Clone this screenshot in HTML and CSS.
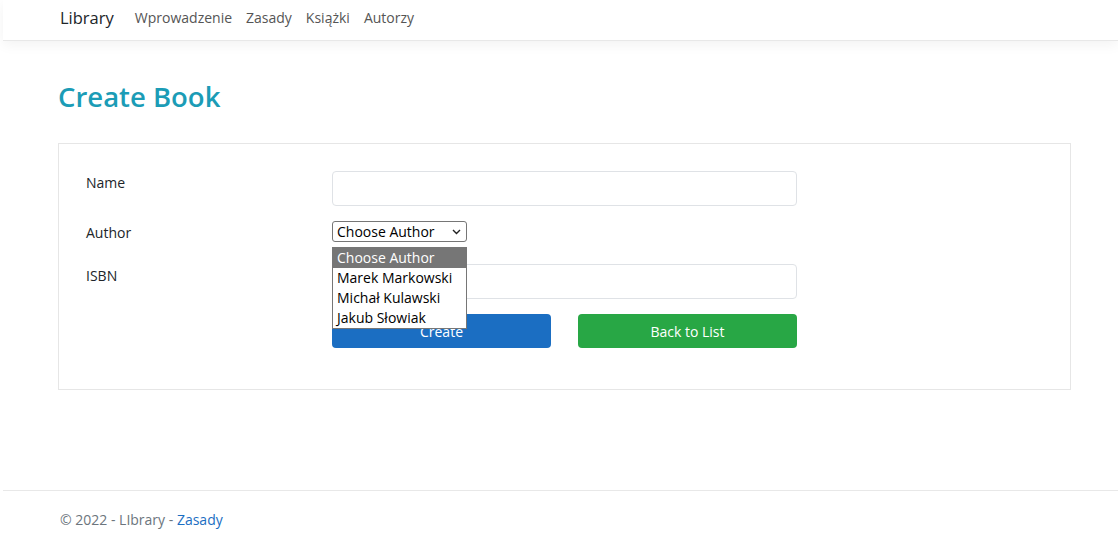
FILE: index.html
```html
<!DOCTYPE html>
<html lang="pl">
<head>
<meta charset="utf-8">
<title>Create Book - Library</title>
<link rel="stylesheet" href="styles.css">
</head>
<body>
<header class="topbar">
  <nav class="nav">
    <span class="brand">Library</span>
    <a class="nav-link">Wprowadzenie</a>
    <a class="nav-link">Zasady</a>
    <a class="nav-link">Książki</a>
    <a class="nav-link">Autorzy</a>
  </nav>
</header>
<main class="main">
  <h1 class="title">Create Book</h1>
  <section class="card">
    <form class="form">
      <label class="label">Name</label>
      <div class="field"><div class="input"></div></div>
      <label class="label">Author</label>
      <div class="field select-field">
        <div class="select"><span>Choose Author</span>
          <svg class="chev" width="9" height="6" viewBox="0 0 9 6"><path d="M1 1 L4.5 4.5 L8 1" fill="none" stroke="#222" stroke-width="1.4"/></svg>
        </div>
        <ul class="popup">
          <li class="opt active">Choose Author</li>
          <li class="opt">Marek Markowski</li>
          <li class="opt">Michał Kulawski</li>
          <li class="opt">Jakub Słowiak</li>
        </ul>
      </div>
      <label class="label">ISBN</label>
      <div class="field"><div class="input"></div></div>
      <span></span>
      <div class="buttons">
        <button type="button" class="btn btn-primary">Create</button>
        <button type="button" class="btn btn-success">Back to List</button>
      </div>
    </form>
  </section>
</main>
<footer class="footer">
  <div class="footer-inner">© 2022 - LIbrary - <a class="footer-link">Zasady</a></div>
</footer>
</body>
</html>
```
FILE: styles.css
```css
html, body {
  margin: 0;
  padding: 0;
  background: #fff;
}
body {
  font-family: "Open Sans", "Noto Sans", sans-serif;
  color: #212529;
  font-size: 14px;
}
.topbar {
  margin-left: 3px;
  height: 41px;
  border-bottom: 1px solid #e8e8e8;
  box-shadow: 0 4px 12px rgba(0,0,0,0.05);
  box-sizing: border-box;
}
.nav {
  display: flex;
  align-items: center;
  height: 34px;
  padding-left: 57px;
}
.brand {
  font-size: 16.5px;
  color: #212529;
  margin-right: 21px;
}
.nav-link {
  font-size: 14px;
  color: #555;
  margin-right: 14px;
}
.main {
  padding: 0 47px 0 58px;
}
.title {
  margin: 24px 0 0 0;
  font-size: 27.5px;
  line-height: 64px;
  font-weight: 600;
  color: #1b9cb6;
  height: 64px;
}
.card {
  margin-top: 14px;
  border: 1px solid #e6e6e6;
  height: 247px;
  box-sizing: border-box;
  padding: 27px 0 0 27px;
}
.form {
  display: grid;
  grid-template-columns: 246px 465px;
  row-gap: 15px;
}
.label {
  line-height: 24px;
  font-size: 14px;
}
.input {
  height: 35px;
  border: 1px solid #dfe2e6;
  border-radius: 4px;
  box-sizing: border-box;
}
.select-field {
  position: relative;
  height: 21px;
  margin-bottom: 7px;
}
.select {
  width: 135px;
  height: 21px;
  box-sizing: border-box;
  border: 1px solid #767676;
  border-radius: 3px;
  display: flex;
  align-items: center;
  justify-content: space-between;
  padding: 0 5px 0 4px;
  font-size: 14px;
  color: #000;
}
.popup {
  position: absolute;
  top: 26px;
  left: 0;
  width: 135px;
  margin: 0;
  padding: 0;
  list-style: none;
  border: 1px solid #767676;
  box-sizing: border-box;
  background: #fff;
  z-index: 5;
}
.opt {
  height: 20px;
  line-height: 20px;
  padding-left: 4px;
  font-size: 14px;
  color: #000;
  white-space: nowrap;
}
.opt.active {
  background: #767676;
  color: #fff;
}
.buttons {
  display: flex;
  gap: 27px;
}
.btn {
  width: 219px;
  height: 34px;
  border: none;
  border-radius: 4px;
  color: #fff;
  font-family: inherit;
  font-size: 14px;
  padding: 0;
}
.btn-primary { background: #1b6ec2; }
.btn-success { background: #28a745; }
.footer {
  margin-top: 100px;
  margin-left: 3px;
  border-top: 1px solid #e8e8e8;
}
.footer-inner {
  padding-left: 57px;
  line-height: 24px;
  padding-top: 17px;
  color: #6c757d;
  font-size: 14px;
}
.footer-link {
  color: #1b6ec2;
}
```
